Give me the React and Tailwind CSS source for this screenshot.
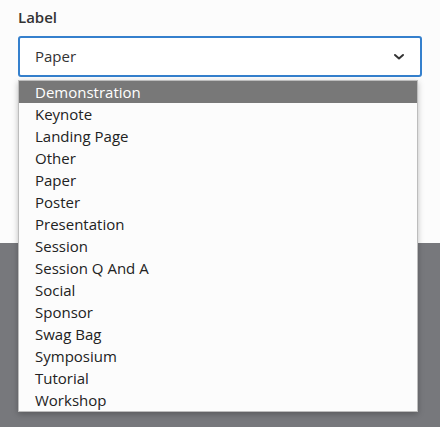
const options = [
  "Demonstration",
  "Keynote",
  "Landing Page",
  "Other",
  "Paper",
  "Poster",
  "Presentation",
  "Session",
  "Session Q And A",
  "Social",
  "Sponsor",
  "Swag Bag",
  "Symposium",
  "Tutorial",
  "Workshop",
];

export default function App() {
  return (
    <div className="relative h-[427px] w-[440px] overflow-hidden bg-[#77787c] font-['Open_Sans',sans-serif]">
      <div className="h-[243px] bg-[#fcfcfc] px-[18px] pt-[7px]">
        <div className="text-[15px] font-semibold leading-[20px] text-[#333]">Label</div>
        <div className="mt-[9px] flex h-[41px] items-center justify-between rounded-[3px] border-2 border-[#3580cd] bg-white pl-[15px] pr-[15px]">
          <span className="text-[15px] text-[#333]">Paper</span>
          <svg width="12" height="8" viewBox="0 0 12 8" fill="none" stroke="#333" strokeWidth="2" strokeLinecap="round" strokeLinejoin="round">
            <path d="M2 2 6 5.5 10 2" />
          </svg>
        </div>
      </div>
      <ul className="absolute left-[18px] top-[80px] w-[400px] border border-[#bdbdbd] bg-[#fcfcfc] py-0 shadow-[0_2px_6px_rgba(0,0,0,0.25)]">
        {options.map((o, i) => (
          <li
            key={o}
            className={`h-[22px] pl-[16px] text-[15px] leading-[22px] ${i === 0 ? "bg-[#787878] text-white" : "text-[#222]"}`}
          >
            {o}
          </li>
        ))}
      </ul>
    </div>
  );
}
